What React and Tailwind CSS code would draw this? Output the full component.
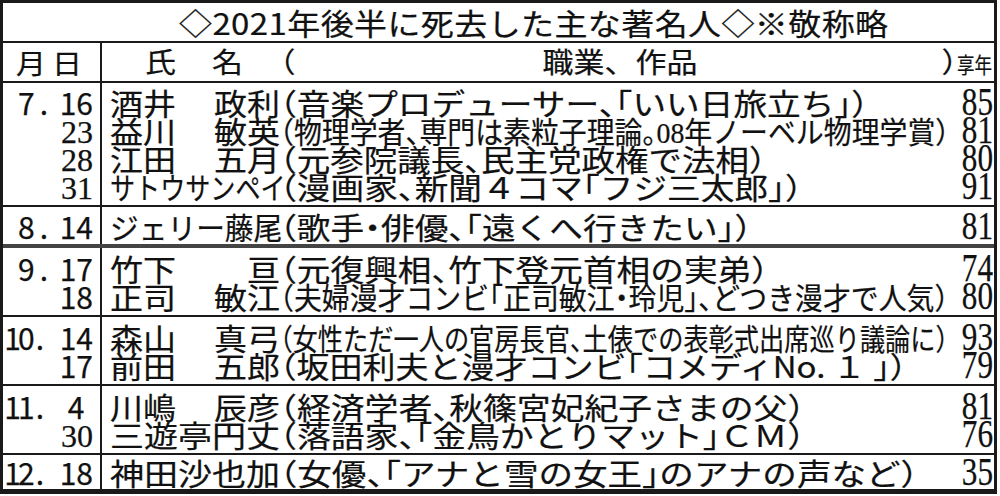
import React from "react";

const SERIF = "font-['Liberation_Serif',serif]";

const groups = [
  {
    bd: "border-b-2 border-[#1a1a1a]",
    pad: "pt-[5px] pb-[5px]",
    rows: [
      { m: "7", d: "16", name: ["酒井", "政利"], desc: "（音楽プロデューサー、「いい日旅立ち」）", sx: "scale-x-[1.02]", age: "85" },
      {
        d: "23",
        serif: true,
        name: ["益川", "敏英"],
        desc: (
          <>
            （物理学者、専門は素粒子理論。<span className={SERIF}>08</span>年ノーベル物理学賞）
          </>
        ),
        sx: "scale-x-[0.845]",
        age: "81",
      },
      { d: "28", serif: true, name: ["江田", "五月"], desc: "（元参院議長、民主党政権で法相）", sx: "scale-x-[1.015]", age: "80" },
      { d: "31", serif: true, name: "サトウサンペイ", nsx: "scale-x-[0.76]", desc: "（漫画家、新聞４コマ「フジ三太郎」）", sx: "scale-x-[1.02]", age: "91" },
    ],
  },
  {
    bd: "border-b-4 border-[#444]",
    pad: "pt-[5px] pb-[4px]",
    rows: [
      { m: "8", d: "14", name: "ジェリー藤尾", nsx: "scale-x-[0.87]", desc: "（歌手・俳優、「遠くへ行きたい」）", sx: "scale-x-[1.02]", age: "81" },
    ],
  },
  {
    bd: "border-b-2 border-[#1a1a1a]",
    pad: "pt-[6px] pb-[5px]",
    rows: [
      { m: "9", d: "17", name: ["竹下", "亘"], desc: "（元復興相、竹下登元首相の実弟）", sx: "scale-x-[1.02]", age: "74" },
      { d: "18", name: ["正司", "敏江"], desc: "（夫婦漫才コンビ「正司敏江・玲児」、どつき漫才で人気）", sx: "scale-x-[0.845]", age: "80" },
    ],
  },
  {
    bd: "border-b-2 border-[#1a1a1a]",
    pad: "pt-[6px] pb-[5px]",
    rows: [
      { m: "10", two: true, d: "14", name: ["森山", "真弓"], desc: "（女性ただ一人の官房長官、土俵での表彰式出席巡り議論に）", sx: "scale-x-[0.764]", age: "93" },
      { d: "17", name: ["前田", "五郎"], desc: "（坂田利夫と漫才コンビ「コメディNo. １ 」）", sx: "scale-x-[1]", age: "79" },
    ],
  },
  {
    bd: "border-b-2 border-[#1a1a1a]",
    pad: "pt-[6px] pb-[5px]",
    rows: [
      { m: "11", two: true, d: "4", single: true, name: ["川嶋", "辰彦"], desc: "（経済学者、秋篠宮妃紀子さまの父）", sx: "scale-x-[1.025]", age: "81" },
      { d: "30", serif: true, name: "三遊亭円丈", nsx: "scale-x-[1.03]", desc: "（落語家、「金鳥かとりマット」ＣＭ）", sx: "scale-x-[1.025]", age: "76" },
    ],
  },
  {
    bd: "",
    pad: "pt-[3px] pb-[3px]",
    rows: [
      { m: "12", two: true, d: "18", name: "神田沙也加", nsx: "scale-x-[1.03]", desc: "（女優、「アナと雪の女王」のアナの声など）", sx: "scale-x-[1.047]", age: "35" },
    ],
  },
];

function Month({ r }) {
  if (r.two) {
    return (
      <span className="w-[32px] text-right">
        <span className="mr-[-3px]">{r.m[0]}</span>
        {r.m[1]}
      </span>
    );
  }
  return <span className="w-[32px] text-right">{r.m}</span>;
}

function DateLine({ r }) {
  if (!r.m) {
    return (
      <div className="flex h-[28px] justify-end pr-[7px]">
        {r.serif ? (
          <span className={`w-[34px] text-right text-[32px] leading-[33px] ${SERIF}`}>{r.d}</span>
        ) : (
          <span className="w-[34px] text-right text-[30px] leading-[28px]">{r.d}</span>
        )}
      </div>
    );
  }
  return (
    <div className="flex h-[28px] justify-end pr-[7px] text-[30px] leading-[28px]">
      <Month r={r} />
      <span className={`w-[25px] ${r.two ? "pl-[1px]" : "pl-[5px]"}`}>.</span>
      <span className={`w-[34px] ${r.single ? "text-center" : "text-right"}`}>{r.d}</span>
    </div>
  );
}

function Name({ r }) {
  if (Array.isArray(r.name)) {
    return (
      <div className="flex w-[170px] shrink-0 justify-between">
        <span>{r.name[0]}</span>
        <span>{r.name[1]}</span>
      </div>
    );
  }
  return (
    <div className="w-[170px] shrink-0">
      <span className={`inline-block origin-left ${r.nsx}`}>{r.name}</span>
    </div>
  );
}

function MainLine({ r }) {
  return (
    <div className="flex h-[28px] pl-[8px]">
      <div className="flex min-w-0 flex-1 scale-y-90 whitespace-nowrap text-[33px] leading-[28px]">
        <Name r={r} />
        <span className={`inline-block origin-left ${r.sx}`}>{r.desc}</span>
      </div>
      <div className={`w-[40px] shrink-0 pr-[5px] text-right text-[39px] leading-[28px] ${SERIF}`}>
        <span className="inline-block origin-right scale-x-[0.8]">{r.age}</span>
      </div>
    </div>
  );
}

export default function App() {
  return (
    <div className="h-[496px] w-[1000px] bg-white">
      <div className="w-[997px] border-[3px] border-b-[5px] border-[#1a1a1a] font-['Noto_Sans_CJK_JP',sans-serif] text-[#111] [-webkit-text-stroke:0.25px_#111] [font-feature-settings:'halt']">
        {/* title */}
        <div className="flex h-[40px] items-center border-b-2 border-[#1a1a1a] pl-[176px]">
          <div className="scale-y-90 whitespace-nowrap text-[33px] leading-[38px] tracking-[0.4px]">
            ◇2021年後半に死去した主な著名人◇※敬称略
          </div>
        </div>
        {/* header */}
        <div className="flex h-[40px] border-b-2 border-[#1a1a1a]">
          <div className="flex w-[99px] shrink-0 items-center border-r-2 border-[#1a1a1a] pl-[13px]">
            <span className="inline-block scale-y-90 text-[30px] leading-[36px] tracking-[6px]">月日</span>
          </div>
          <div className="flex flex-1 items-center pl-[8px] pr-[2px]">
            <div className="flex flex-1 scale-y-90 items-baseline whitespace-nowrap text-[31px] leading-[36px]">
              <div className="flex w-[170px] shrink-0 justify-between pl-[35px] pr-[37px]">
                <span>氏</span>
                <span>名</span>
              </div>
              <span>（</span>
              <span className="ml-[247px] [font-feature-settings:normal]">職業、作品</span>
              <span className="flex-1" />
              <span>）</span>
              <span className="inline-block w-[35px] origin-left scale-x-[0.73] text-[24px]">享年</span>
            </div>
          </div>
        </div>
        {/* groups */}
        {groups.map((g, gi) => (
          <div key={gi} className={`flex ${g.bd}`}>
            <div className={`w-[99px] shrink-0 border-r-2 border-[#1a1a1a] ${g.pad}`}>
              {g.rows.map((r, i) => (
                <DateLine key={i} r={r} />
              ))}
            </div>
            <div className={`min-w-0 flex-1 ${g.pad}`}>
              {g.rows.map((r, i) => (
                <MainLine key={i} r={r} />
              ))}
            </div>
          </div>
        ))}
      </div>
    </div>
  );
}
